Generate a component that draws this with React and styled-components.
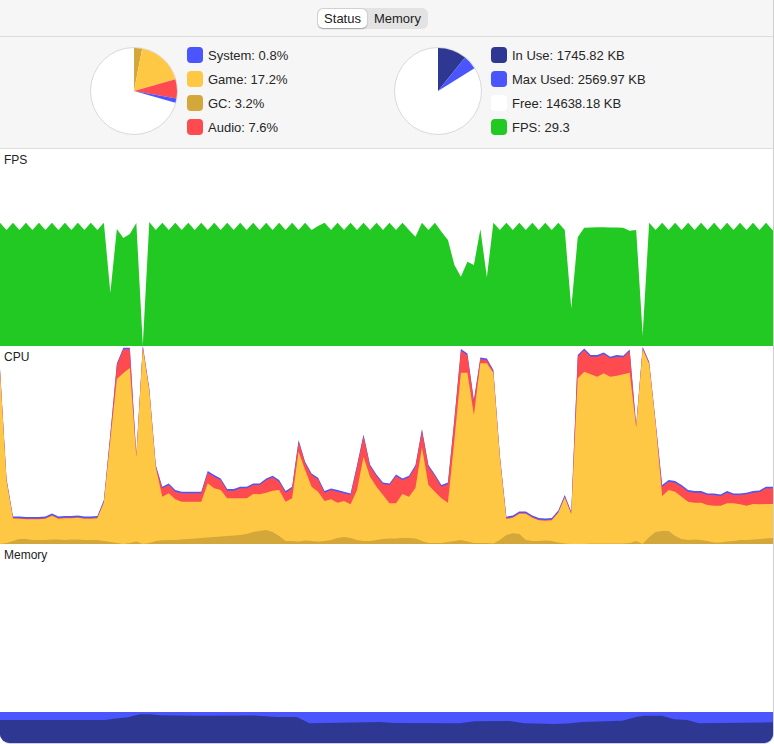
import React from "react";
import styled, { createGlobalStyle } from "styled-components";

const GlobalStyle = createGlobalStyle`
  html, body {
    margin: 0;
    padding: 0;
    background: #ffffff;
  }
  body {
    font-family: "Liberation Sans", Arial, sans-serif;
    color: #222222;
  }
`;

const colors = {
  system: "#4a55fe",
  game: "#fec844",
  gc: "#d4a73a",
  audio: "#fe4b50",
  inUse: "#2e3893",
  maxUsed: "#4a55fe",
  free: "#ffffff",
  fps: "#21c922",
};

const STEP = 6.5;
const WIDTH = 774;

// fps chart, local y values (chart is 197 tall)
const P = 73.7;
const T = 81;
const FPS_OVERRIDES = {
  16: P, 17: 143.7, 18: 80, 19: 89, 20: 85, 21: 74, 22: 196, 23: 73, 49: 77,
  63: 81, 64: 87.7, 65: P, 66: T, 67: P, 68: 82.7, 69: 91, 70: 116, 71: 127.7,
  72: 112.7, 73: 116, 74: 80.3, 75: 128.3, 76: P, 88: 159.3, 89: 88.3, 90: 78.7,
  91: 78.5, 92: 78.3, 93: 78.3, 94: 78.5, 95: 78.5, 96: 78.7, 97: 81.7, 98: 81,
  99: 186,
};
const fps = Array.from({ length: 120 }, (_, i) => {
  if (FPS_OVERRIDES[i] !== undefined) return FPS_OVERRIDES[i];
  const evenPeak = i <= 16 || (i >= 50 && i <= 63) || i >= 76;
  const peak = evenPeak ? i % 2 === 0 : i % 2 === 1;
  return peak ? P : T;
});

// cpu chart, absolute page y values
const CPU_TOP = 346;
const cpuTotal = [
  370, 480, 518, 518, 518.5, 518.5, 518.5, 518, 515, 518,
  517.5, 517.5, 517, 518, 518, 517.5, 501.7, 435, 365, 349.3,
  349.3, 456.7, 347, 390, 466.7, 488.3, 485, 491.7, 493.3, 493.3,
  493.3, 493.3, 472.7, 476.7, 480, 490.7, 490.7, 488.3, 488.3, 485,
  485, 480, 477.3, 481.7, 492.7, 488.3, 441.7, 463.3, 475, 479.3,
  492.7, 490, 491.7, 493.3, 495, 466.7, 436, 466, 476, 484,
  485, 476, 480, 477.3, 466.7, 430.7, 466.7, 476, 486.7, 484,
  420, 350.7, 355, 401.7, 359, 360, 371.7, 456.7, 518.3, 517,
  513, 513, 517, 519.5, 520, 519.5, 512, 496.7, 513.3, 356.7,
  350, 356.7, 356.7, 354, 358.3, 356.7, 357.3, 351, 426.7, 348.3,
  363.3, 423.3, 486.7, 481.7, 482.7, 486.7, 491.7, 492.7, 492.7, 495,
  495, 496, 492.7, 495, 495, 494.3, 492.7, 492, 488.3, 488.3,
];
const _ = null;
const cpuGameRaw = [
  370.5, 480.5, 518.5, _, _, _, _, _, _, _,
  _, _, _, _, _, _, 502.5, 440, 379, 373,
  368, 457.2, 347.8, 391, 467.5, 496.7, 493.3, 499.3, 501.7, 501.7,
  501.7, 501.7, 483.3, 488.3, 490, 498.3, 498.3, 498.3, 498.3, 494,
  494.3, 492.7, 490.7, 490, 501.7, 498.3, 451.7, 470, 486.7, 491.7,
  501, 499.3, 502.7, 501, 504.3, 490, 456.7, 476.7, 486.7, 495,
  503.3, 503.3, 494, 496.7, 488, 447.3, 485, 491.7, 498.3, 502.7,
  440, 372.7, 372.7, 415, 363.3, 363.3, 373, 457.5, _, _,
  _, _, _, _, _, _, _, _, _, 378.3,
  371.7, 374.3, 376.7, 373.3, 376.7, 375.7, 374.3, 372.7, 427.5, 349,
  364, 424, 496, 490, 491.7, 496.7, 501.7, 502.7, 502.7, 505,
  505.7, 505.7, 503.3, 503.3, 504.3, 505.7, 504, 504.3, 504, 504,
];
const cpuGame = cpuGameRaw.map((v, i) => (v === null ? cpuTotal[i] + 0.8 : v));
const cpuGc = [
  544, 543, 541, 539, 539, 540, 540, 540, 539.5, 539.5,
  540, 539.5, 539.5, 540, 540, 540, 541, 542, 543, 544,
  543, 541.5, 544, 543, 541, 540.3, 540, 540, 539.5, 539,
  538.5, 538, 537.5, 537, 536.5, 536, 535.5, 535, 534, 532,
  531, 530, 532, 536, 541, 541, 541.5, 540.5, 541, 541.5,
  541, 540, 538, 537, 538, 540, 541, 541, 540, 539,
  538.5, 538.5, 538, 538, 538.5, 541, 543, 543, 543, 542,
  541, 540, 541.5, 543, 543, 543, 543.5, 540, 535, 533.3,
  534, 540, 541, 541, 540.5, 541, 542.5, 543.5, 544, 544,
  544, 543.5, 543.5, 543.5, 543.5, 543.5, 543.5, 543, 541, 544,
  537, 532, 531, 531, 536, 539, 540, 539.5, 540, 541,
  542.5, 542.5, 541.5, 541, 540, 540, 539.5, 539, 538.5, 538,
];

// memory chart, absolute page coordinates
const MEM_TOP = 544;
const memMaxUsed = 712;
const memInUse = [
  [0, 720], [105, 720], [116, 718.5], [128, 717.3], [140, 714.3], [150, 714.3],
  [160, 715.3], [200, 715.7], [255, 715.5], [277, 717], [297, 717], [310, 723.3],
  [380, 722], [395, 723], [460, 723.3], [475, 721.3], [510, 721], [525, 723.3],
  [555, 724], [568, 723.5], [583, 722], [623, 720.7], [638, 716.7], [645, 715.7],
  [663, 715.7], [675, 719.3], [688, 720], [700, 723.3], [774, 722.3],
];

function sampleArea(values, height, offset = 0, shift = 0) {
  const pts = values.map(
    (v, i) => `${(i * STEP).toFixed(2)},${(v - offset + shift).toFixed(2)}`
  );
  const last = values[values.length - 1] - offset + shift;
  return `0,${height} ${pts.join(" ")} ${WIDTH},${last.toFixed(2)} ${WIDTH},${height}`;
}

function pointArea(points, height, offset = 0) {
  const pts = points.map(([x, y]) => `${x},${(y - offset).toFixed(2)}`);
  return `0,${height} ${pts.join(" ")} ${WIDTH},${height}`;
}

function slicePath(cx, cy, r, a0, a1) {
  const at = (a) => {
    const rad = ((a - 90) * Math.PI) / 180;
    return [cx + r * Math.cos(rad), cy + r * Math.sin(rad)];
  };
  const [x0, y0] = at(a0);
  const [x1, y1] = at(a1);
  const large = a1 - a0 > 180 ? 1 : 0;
  return `M${cx},${cy} L${x0.toFixed(2)},${y0.toFixed(2)} A${r},${r} 0 ${large} 1 ${x1.toFixed(2)},${y1.toFixed(2)} Z`;
}

const cpuSlices = [
  { color: colors.gc, from: 0, to: 11 },
  { color: colors.game, from: 11, to: 74 },
  { color: colors.audio, from: 74, to: 100 },
  { color: colors.system, from: 100, to: 106 },
];
const memSlices = [
  { color: colors.inUse, from: 0, to: 39 },
  { color: colors.maxUsed, from: 39, to: 58 },
];

const cpuLegend = [
  { color: colors.system, label: "System: 0.8%" },
  { color: colors.game, label: "Game: 17.2%" },
  { color: colors.gc, label: "GC: 3.2%" },
  { color: colors.audio, label: "Audio: 7.6%" },
];
const memLegend = [
  { color: colors.inUse, label: "In Use: 1745.82 KB" },
  { color: colors.maxUsed, label: "Max Used: 2569.97 KB" },
  { color: colors.free, label: "Free: 14638.18 KB" },
  { color: colors.fps, label: "FPS: 29.3" },
];

const Window = styled.div`
  width: 774px;
  height: 744px;
  box-sizing: border-box;
  display: flex;
  flex-direction: column;
  border-right: 1px solid #cfcfcf;
  border-bottom: 1px solid #cfcfcf;
  border-radius: 0 0 10px 10px;
  overflow: hidden;
  background: #ffffff;
`;

const Toolbar = styled.div`
  height: 36px;
  flex: none;
  display: flex;
  align-items: center;
  justify-content: center;
  background: #f6f6f6;
  border-bottom: 1px solid #dcdcdc;
`;

const Segmented = styled.div`
  display: flex;
  height: 21px;
  box-sizing: border-box;
  padding: 1px;
  border-radius: 6px;
  background: #e3e3e3;
  margin-right: 28px;
`;

const Segment = styled.div`
  padding: 0 6.5px;
  font-size: 13px;
  line-height: 19px;
  color: #222222;
  border-radius: 5px;
  background: ${({ $active }) => ($active ? "#ffffff" : "transparent")};
  box-shadow: ${({ $active }) =>
    $active ? "0 0.5px 1.5px rgba(0,0,0,0.28), 0 0 0 0.5px rgba(0,0,0,0.06)" : "none"};
`;

const StatusPanel = styled.div`
  height: 112px;
  flex: none;
  box-sizing: border-box;
  padding: 6px 0 0 90px;
  display: grid;
  grid-template-columns: 304px auto;
  align-items: start;
  background: #f6f6f6;
  border-bottom: 1px solid #dedede;
`;

const PieGroup = styled.div`
  display: flex;
  align-items: center;
  gap: 9px;
`;

const Legend = styled.div`
  display: flex;
  flex-direction: column;
`;

const LegendRow = styled.div`
  height: 24px;
  display: flex;
  align-items: center;
  gap: 5px;
  font-size: 13px;
  color: #262626;
  white-space: nowrap;
`;

const Swatch = styled.span`
  width: 16px;
  height: 16px;
  border-radius: 4px;
  flex: none;
  background: ${({ $color }) => $color};
`;

const ChartSection = styled.div`
  position: relative;
  height: ${({ $height }) => ($height ? `${$height}px` : "auto")};
  flex: ${({ $height }) => ($height ? "none" : "1")};
  background: #ffffff;
`;

const ChartLabel = styled.span`
  position: absolute;
  left: 4px;
  top: 4px;
  font-size: 12px;
  color: #222222;
  z-index: 1;
`;

const ChartSvg = styled.svg`
  display: block;
  width: 100%;
  height: 100%;
`;

function Pie({ slices }) {
  return (
    <svg width="88" height="88" viewBox="0 0 88 88">
      <circle cx="44" cy="44" r="43.5" fill="#ffffff" stroke="#d9d9d9" strokeWidth="1" />
      {slices.map((s) => (
        <path key={s.color + s.from} d={slicePath(44, 44, 43, s.from, s.to)} fill={s.color} />
      ))}
    </svg>
  );
}

function StatGroup({ slices, legend }) {
  return (
    <PieGroup>
      <Pie slices={slices} />
      <Legend>
        {legend.map((row) => (
          <LegendRow key={row.label}>
            <Swatch $color={row.color} />
            {row.label}
          </LegendRow>
        ))}
      </Legend>
    </PieGroup>
  );
}

export default function App() {
  const fpsH = 197;
  const cpuH = 198;
  const memH = 199;
  return (
    <>
      <GlobalStyle />
      <Window>
        <Toolbar>
          <Segmented>
            <Segment $active>Status</Segment>
            <Segment>Memory</Segment>
          </Segmented>
        </Toolbar>

        <StatusPanel>
          <StatGroup slices={cpuSlices} legend={cpuLegend} />
          <StatGroup slices={memSlices} legend={memLegend} />
        </StatusPanel>

        <ChartSection $height={fpsH}>
          <ChartLabel>FPS</ChartLabel>
          <ChartSvg viewBox={`0 0 ${WIDTH} ${fpsH}`} preserveAspectRatio="none">
            <polygon points={sampleArea(fps, fpsH)} fill={colors.fps} />
          </ChartSvg>
        </ChartSection>

        <ChartSection $height={cpuH}>
          <ChartLabel>CPU</ChartLabel>
          <ChartSvg viewBox={`0 0 ${WIDTH} ${cpuH}`} preserveAspectRatio="none">
            <polygon points={sampleArea(cpuTotal, cpuH, CPU_TOP, -1.6)} fill={colors.system} />
            <polygon points={sampleArea(cpuTotal, cpuH, CPU_TOP)} fill={colors.audio} />
            <polygon points={sampleArea(cpuGame, cpuH, CPU_TOP)} fill={colors.game} />
            <polygon points={sampleArea(cpuGc, cpuH, CPU_TOP)} fill={colors.gc} />
          </ChartSvg>
        </ChartSection>

        <ChartSection>
          <ChartLabel>Memory</ChartLabel>
          <ChartSvg viewBox={`0 0 ${WIDTH} ${memH}`} preserveAspectRatio="none">
            <rect x="0" y={memMaxUsed - MEM_TOP} width={WIDTH} height={memH} fill={colors.maxUsed} />
            <polygon points={pointArea(memInUse, memH, MEM_TOP)} fill={colors.inUse} />
          </ChartSvg>
        </ChartSection>
      </Window>
    </>
  );
}
